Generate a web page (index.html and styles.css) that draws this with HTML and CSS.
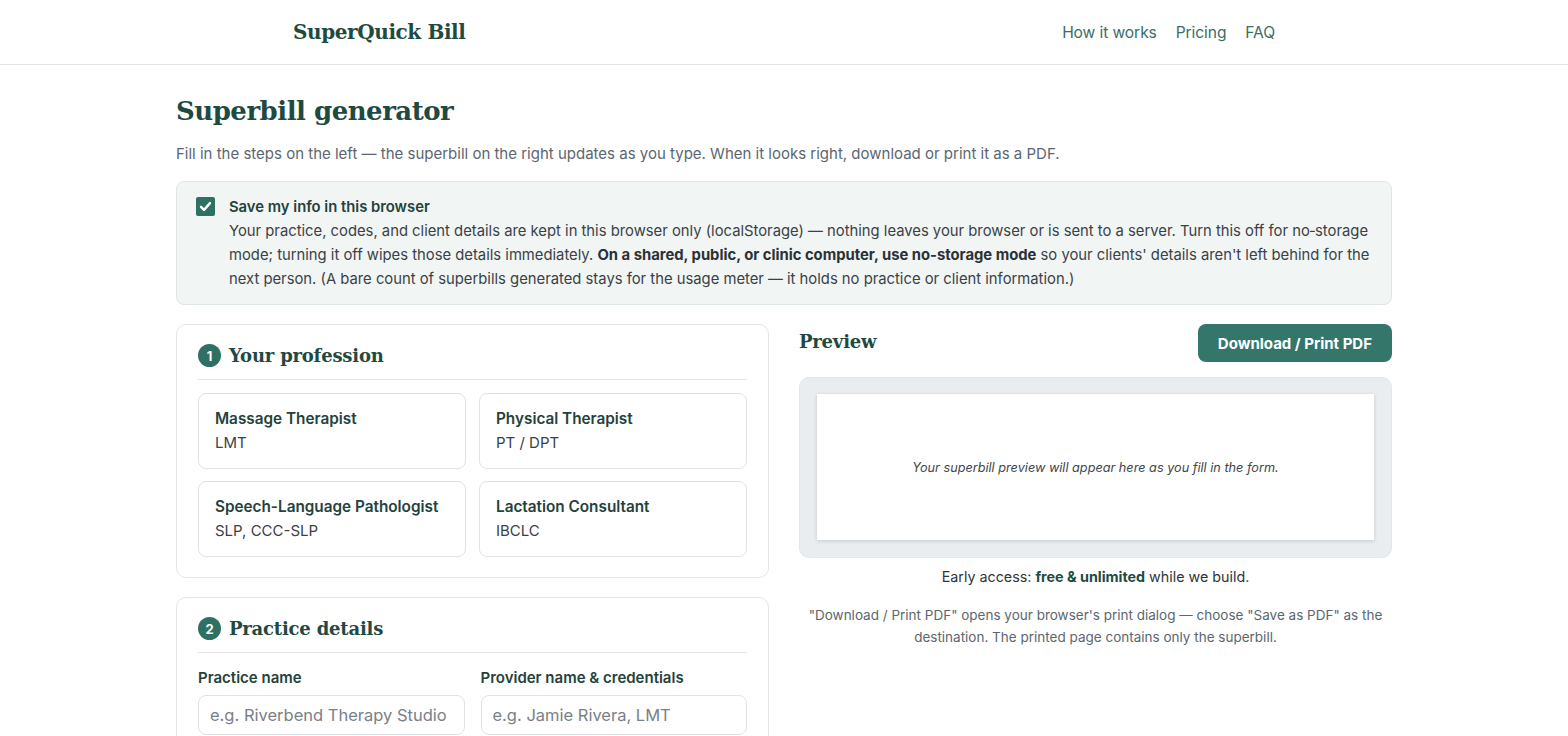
FILE: index.html
```html
<!DOCTYPE html>
<html lang="en">

<head>
    <meta charset="UTF-8">
    <meta name="viewport" content="width=device-width, initial-scale=1.0">
    <title>SuperQuick Bill — Superbill generator</title>
    <link rel="stylesheet" href="styles.css">
</head>

<body>
    <header class="site-header">
        <div class="header-inner">
            <a class="logo" href="#">SuperQuick Bill</a>
            <nav class="nav">
                <a href="#how">How it works</a>
                <a href="#pricing">Pricing</a>
                <a href="#faq">FAQ</a>
            </nav>
        </div>
    </header>

    <main class="page">
        <h1 class="page-title">Superbill generator</h1>
        <p class="lead">Fill in the steps on the left — the superbill on the right updates as you type. When it looks right, download or print it as a PDF.</p>

        <label class="storage-note">
            <input type="checkbox" id="save-info" checked>
            <span class="check-box">
                <svg viewBox="0 0 20 20" width="15" height="15"><path d="M4 10.5l4 4 8-9" fill="none" stroke="#fff" stroke-width="3.2" stroke-linecap="round" stroke-linejoin="round"/></svg>
            </span>
            <span class="note-text">
                <strong class="note-title">Save my info in this browser</strong>
                Your practice, codes, and client details are kept in this browser only (localStorage) — nothing leaves your browser or is sent to a server. Turn this off for no&#8209;storage mode; turning it off wipes those details immediately. <b>On a shared, public, or clinic computer, use no-storage mode</b> so your clients' details aren't left behind for the next person. (A bare count of superbills generated stays for the usage meter — it holds no practice or client information.)
            </span>
        </label>

        <div class="workspace">
            <div class="steps">
                <section class="step">
                    <h2 class="step-title"><span class="step-num">1</span>Your profession</h2>
                    <div class="options">
                        <button class="option" type="button">
                            <span class="option-name">Massage Therapist</span>
                            <span class="option-cred">LMT</span>
                        </button>
                        <button class="option" type="button">
                            <span class="option-name">Physical Therapist</span>
                            <span class="option-cred">PT / DPT</span>
                        </button>
                        <button class="option" type="button">
                            <span class="option-name">Speech-Language Pathologist</span>
                            <span class="option-cred">SLP, CCC-SLP</span>
                        </button>
                        <button class="option" type="button">
                            <span class="option-name">Lactation Consultant</span>
                            <span class="option-cred">IBCLC</span>
                        </button>
                    </div>
                </section>

                <section class="step">
                    <h2 class="step-title"><span class="step-num">2</span>Practice details</h2>
                    <div class="fields">
                        <div class="field">
                            <label for="practice-name">Practice name</label>
                            <input type="text" id="practice-name" placeholder="e.g. Riverbend Therapy Studio">
                        </div>
                        <div class="field">
                            <label for="provider-name">Provider name &amp; credentials</label>
                            <input type="text" id="provider-name" placeholder="e.g. Jamie Rivera, LMT">
                        </div>
                    </div>
                </section>
            </div>

            <aside class="preview">
                <div class="preview-head">
                    <h2 class="preview-title">Preview</h2>
                    <button class="btn-primary" type="button" onclick="window.print()">Download / Print PDF</button>
                </div>
                <div class="preview-frame">
                    <div class="paper">
                        <p class="paper-empty">Your superbill preview will appear here as you fill in the form.</p>
                    </div>
                </div>
                <p class="meter">Early access: <strong>free &amp; unlimited</strong> while we build.</p>
                <p class="print-hint">"Download / Print PDF" opens your browser's print dialog — choose "Save as PDF" as the destination. The printed page contains only the superbill.</p>
            </aside>
        </div>
    </main>
</body>

</html>
```

FILE: styles.css
```css
* {
    margin: 0;
    padding: 0;
    box-sizing: border-box;
}

body {
    font-family: Inter, "Noto Sans", sans-serif;
    color: #2b3136;
    background: #fff;
}

a {
    text-decoration: none;
    color: inherit;
}

/* header */

.site-header {
    height: 65px;
    border-bottom: 1px solid #e3e6e8;
}

.header-inner {
    width: 982px;
    height: 64px;
    margin: 0 auto;
    display: flex;
    align-items: center;
    justify-content: space-between;
}

.logo {
    font-family: "DejaVu Serif", Georgia, serif;
    font-weight: 700;
    font-size: 20px;
    color: #1f4a42;
    letter-spacing: -0.4px;
}

.nav {
    display: flex;
    gap: 19px;
}

.nav a {
    font-size: 15.6px;
    color: #3b6e65;
    letter-spacing: -0.1px;
}

/* page */

.page {
    width: 1216px;
    margin: 0 auto;
    padding-top: 28px;
}

.page-title {
    font-family: "DejaVu Serif", Georgia, serif;
    font-weight: 700;
    font-size: 26px;
    color: #1f4a42;
    letter-spacing: -0.5px;
    line-height: 36px;
}

.lead {
    margin-top: 14px;
    font-size: 15px;
    color: #5c6670;
    line-height: 22px;
}

.storage-note {
    margin-top: 16px;
    display: flex;
    gap: 14px;
    padding: 13px 14px 13px 19px;
    background: #f1f5f4;
    border: 1px solid #dde6e3;
    border-radius: 8px;
    cursor: pointer;
}

.storage-note input {
    display: none;
}

.check-box {
    flex: none;
    width: 19px;
    height: 19px;
    margin-top: 2px;
    border-radius: 2px;
    background: #2f6f64;
    display: grid;
    place-items: center;
}

.note-text {
    font-size: 14.8px;
    line-height: 24px;
    color: #3a4147;
}

.note-title {
    display: block;
    color: #24423c;
    font-weight: 600;
}

.note-text b {
    color: #2b3136;
    font-weight: 700;
}

/* two columns */

.workspace {
    margin-top: 19px;
    display: grid;
    grid-template-columns: 593px 1fr;
    gap: 30px;
    align-items: start;
}

.steps {
    display: flex;
    flex-direction: column;
    gap: 19px;
}

.step {
    border: 1px solid #e3e6e8;
    border-radius: 10px;
    padding: 19px 21px 20px;
}

.step-title {
    display: flex;
    align-items: center;
    gap: 8px;
    font-family: "DejaVu Serif", Georgia, serif;
    font-weight: 700;
    font-size: 18px;
    color: #1f4a42;
    letter-spacing: -0.2px;
    padding-bottom: 12px;
    border-bottom: 1px solid #e3e6e8;
    margin-bottom: 13px;
}

.step-num {
    width: 23px;
    height: 23px;
    border-radius: 50%;
    background: #2f6f64;
    color: #fff;
    font-family: Inter, sans-serif;
    font-size: 13px;
    font-weight: 700;
    letter-spacing: 0;
    display: grid;
    place-items: center;
}

.options {
    display: grid;
    grid-template-columns: 1fr 1fr;
    gap: 12px 13px;
}

.option {
    display: flex;
    flex-direction: column;
    align-items: flex-start;
    gap: 6px;
    height: 76px;
    padding: 16px 16px;
    background: #fff;
    border: 1px solid #e0e4e7;
    border-radius: 8px;
    font-family: Inter, sans-serif;
    text-align: left;
    cursor: pointer;
}

.option-name {
    font-size: 15.3px;
    font-weight: 600;
    color: #24423c;
    line-height: 18px;
}

.option-cred {
    font-size: 15px;
    color: #3a4147;
    line-height: 18px;
}

.fields {
    margin-top: 15px;
    display: grid;
    grid-template-columns: 1fr 1fr;
    gap: 16px;
}

.field label {
    display: block;
    font-size: 15px;
    font-weight: 600;
    color: #24423c;
    margin-bottom: 8px;
}

.field input {
    width: 100%;
    height: 40px;
    padding: 0 11px;
    border: 1px solid #dfe3e6;
    border-radius: 8px;
    font-family: Inter, sans-serif;
    font-size: 16.5px;
    color: #2b3136;
}

.field input::placeholder {
    color: #7a8088;
}

/* preview */

.preview-head {
    display: flex;
    justify-content: space-between;
    align-items: center;
    height: 38px;
}

.preview-title {
    font-family: "DejaVu Serif", Georgia, serif;
    font-weight: 700;
    font-size: 18px;
    color: #1f4a42;
    letter-spacing: -0.2px;
    margin-bottom: 3px;
}

.btn-primary {
    height: 38px;
    padding: 0 20px;
    border: none;
    border-radius: 8px;
    background: #35766b;
    color: #fff;
    font-family: Inter, sans-serif;
    font-size: 15px;
    font-weight: 700;
    cursor: pointer;
}

.preview-frame {
    margin-top: 15px;
    background: #e9edf0;
    border: 1px solid #e3e7ea;
    border-radius: 10px;
    padding: 16px 17px 17px;
}

.paper {
    background: #fff;
    height: 146px;
    display: grid;
    place-items: center;
    box-shadow: 0 1px 4px rgba(0, 0, 0, 0.15);
}

.paper-empty {
    font-size: 12.7px;
    font-style: italic;
    color: #3f454b;
}

.meter {
    margin-top: 10px;
    text-align: center;
    font-size: 14.3px;
    color: #2f353a;
}

.meter strong {
    color: #1f4a42;
}

.print-hint {
    margin-top: 19px;
    padding: 0 4px;
    text-align: center;
    font-size: 13.5px;
    line-height: 22px;
    color: #5c6670;
}
```
